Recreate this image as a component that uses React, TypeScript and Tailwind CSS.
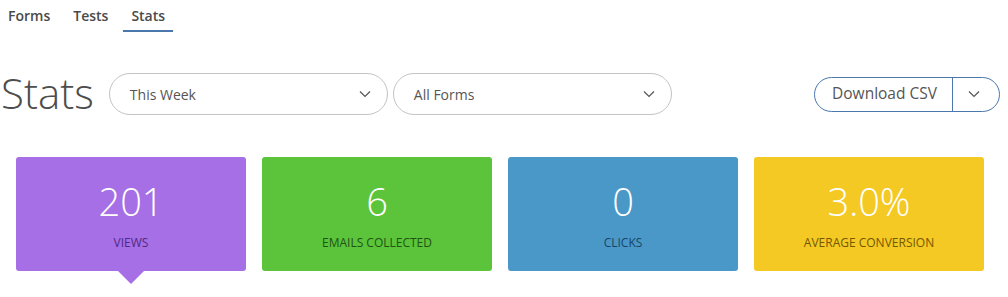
import React from 'react';

const Chevron = ({ className }: { className?: string }) => (
  <svg className={className} width="12" height="8" viewBox="0 0 12 8" fill="none">
    <path d="M1 1.5l5 5 5-5" stroke="currentColor" strokeWidth="1.2" />
  </svg>
);

const stats = [
  { value: '201', label: 'VIEWS', bg: 'bg-[#a66fe5]', fg: 'text-[#4e2a86]', active: true },
  { value: '6', label: 'EMAILS COLLECTED', bg: 'bg-[#5cc43b]', fg: 'text-[#1f5414]', active: false },
  { value: '0', label: 'CLICKS', bg: 'bg-[#4a98c8]', fg: 'text-[#17456a]', active: false },
  { value: '3.0%', label: 'AVERAGE CONVERSION', bg: 'bg-[#f4c924]', fg: 'text-[#735800]', active: false },
];

const App = () => {
  return (
    <div className="w-[1008px] h-[297px] bg-white font-['Open_Sans',sans-serif] text-[#444]">
      <nav className="flex gap-[7px] h-[32px]">
        <a className="px-2 pt-[5px] text-[14px] font-semibold text-[#4a4a4a]">Forms</a>
        <a className="px-2 pt-[5px] text-[14px] font-semibold text-[#4a4a4a]">Tests</a>
        <a className="px-2 pt-[5px] text-[14px] font-semibold text-[#4a4a4a] border-b-2 border-[#4a78ad]">Stats</a>
      </nav>

      <div className="flex items-center mt-[41px] pr-2 h-[42px]">
        <h1 className="text-[42px] font-light leading-none text-[#4d4d4d] ml-[1px] mr-[15px] -mt-[2px]">Stats</h1>
        <div className="flex items-center justify-between w-[279px] h-[42px] rounded-full border border-[#c4c4c4] pl-5 pr-4 text-[14px] text-[#555]">
          <span>This Week</span>
          <Chevron className="text-[#555]" />
        </div>
        <div className="flex items-center justify-between w-[279px] h-[42px] ml-[5px] rounded-full border border-[#c4c4c4] pl-5 pr-4 text-[14px] text-[#555]">
          <span>All Forms</span>
          <Chevron className="text-[#555]" />
        </div>
        <div className="ml-auto flex h-[35px] rounded-full border border-[#4a78ad]">
          <button className="pl-[17px] pr-[15px] text-[15.5px] text-[#555] border-r border-[#4a78ad]">Download CSV</button>
          <button className="w-[46px] flex items-center justify-center pr-1 text-[#555]">
            <Chevron />
          </button>
        </div>
      </div>

      <div className="flex gap-4 px-4 mt-[42px]">
        {stats.map((s) => (
          <div key={s.label} className={`relative w-[230px] h-[114px] rounded-[3px] ${s.bg} flex flex-col items-center`}>
            <div className="text-[38px] font-light text-white leading-none mt-[25px]">{s.value}</div>
            <div className={`text-[12px] mt-[14px] ${s.fg}`}>{s.label}</div>
            {s.active && (
              <div className="absolute left-1/2 -translate-x-1/2 top-full w-0 h-0 border-l-[13px] border-r-[13px] border-t-[13px] border-l-transparent border-r-transparent border-t-[#a66fe5]" />
            )}
          </div>
        ))}
      </div>
    </div>
  );
};

export default App;
